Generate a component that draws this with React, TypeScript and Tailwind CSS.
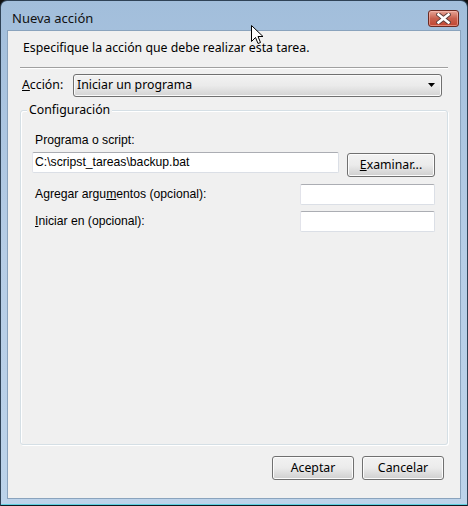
import React from "react";

const seg = { fontFamily: '"Noto Sans", "Open Sans", sans-serif' };
const ms = { fontFamily: '"Liberation Sans", Arial, sans-serif' };

function TextBox({ className, value }: { className: string; value?: string }) {
  return (
    <div
      className={
        "h-[21px] bg-white border border-[#dbdfe6] border-t-[#abadb3] border-l-[#e2e3ea] rounded-[2px] flex items-center px-[2px] text-[12.2px] text-black " +
        className
      }
      style={ms}
    >
      {value}
    </div>
  );
}

function Btn({ children, className }: { children: React.ReactNode; className: string }) {
  return (
    <div
      className={
        "h-[24px] rounded-[3px] border border-[#707070] bg-gradient-to-b from-[#f2f2f2] via-[#ebebeb] to-[#cfcfcf] shadow-[inset_0_0_0_1px_#fcfcfc] flex items-center justify-center text-[12.3px] text-black " +
        className
      }
      style={seg}
    >
      {children}
    </div>
  );
}

export default function App() {
  return (
    <div className="w-[468px] h-[506px] bg-[#101010] relative overflow-hidden">
      <div className="w-full h-full rounded-t-[7px] border border-[#2f4256] border-b-[#101820] bg-gradient-to-b from-[#a2bedb] via-[#b6cde6] to-[#bcd3ea] flex flex-col px-[6px] pb-[6px] shadow-[inset_0_-1px_0_#5fd0e0]">
        {/* title bar */}
        <div className="h-[29px] flex items-start justify-between shrink-0">
          <div className="pt-[8px] pl-[5px] text-[13px] leading-[18px] text-[#111]" style={seg}>
            Nueva acción
          </div>
          <div className="mt-[9px] mr-[2px] w-[31px] h-[17px] rounded-[3px] border border-[#6b2a22] bg-gradient-to-b from-[#e6a597] via-[#c8604e] to-[#c24632] shadow-[inset_0_0_0_1px_rgba(255,200,190,0.5)] flex items-center justify-center">
            <svg width="15" height="11" viewBox="0 0 15 11">
              <path
                d="M2.5 1.5 L12.5 9.5 M12.5 1.5 L2.5 9.5"
                stroke="#5a3a38"
                strokeWidth="4.4"
                strokeLinecap="square"
              />
              <path
                d="M2.5 1.5 L12.5 9.5 M12.5 1.5 L2.5 9.5"
                stroke="#ffffff"
                strokeWidth="2.6"
                strokeLinecap="square"
              />
            </svg>
          </div>
        </div>

        {/* client */}
        <div className="flex-1 bg-[#f0f0f0] border border-[#8aa3bd] flex flex-col text-black" style={seg}>
          <div className="pl-[15px] pt-[8px] h-[36px] text-[12.3px] leading-[17px]">
            Especifique la acción que debe realizar esta tarea.
          </div>
          <div className="ml-[12px] mr-[12px] h-[2px] border-t border-[#a0a0a0] border-b border-b-white" />
          <div className="flex items-center mt-[5px] ml-[14px] mr-[18px] h-[23px]">
            <div className="w-[51px] text-[12.3px]">
              <span className="underline">A</span>cción:
            </div>
            <div className="flex-1 h-[23px] rounded-[3px] border border-[#707070] bg-gradient-to-b from-[#f2f2f2] via-[#ebebeb] to-[#d3d3d3] shadow-[inset_0_0_0_1px_#fafafa] flex items-center justify-between pl-[3px] pr-[5px] text-[12.3px]">
              <span>Iniciar un programa</span>
              <svg width="8" height="5" viewBox="0 0 8 5">
                <path d="M0 0 H7 L3.5 4 Z" fill="#000" />
              </svg>
            </div>
          </div>

          {/* group box */}
          <div className="relative mt-[13px] ml-[12px] mr-[12px] h-[335px] rounded-[3px] border border-[#d5dfe5] shadow-[inset_1px_1px_0_#fff,1px_1px_0_#fff]">
            <div className="absolute -top-[10px] left-[6px] px-[2px] bg-[#f0f0f0] text-[12.3px] leading-[18px]">
              Configuración
            </div>
            <div className="pl-[14px] pt-[19px] text-[12.2px]" style={ms}>
              <div className="h-[20px] flex items-center">
                <span>
                  Pro<span className="underline">g</span>rama o script:
                </span>
              </div>
              <div className="flex items-start mt-[2px] ml-[-3px]">
                <TextBox className="w-[307px] pl-[2px]" value="C:\scripst_tareas\backup.bat" />
                <Btn className="ml-[8px] mt-[1px] w-[88px] h-[23px] border-[#3c7fb1] shadow-[inset_0_0_0_1px_#48c8f4,inset_0_0_0_2px_#fafafa]">
                  <span className="underline">E</span>xaminar...
                </Btn>
              </div>
              <div className="flex items-center mt-[7px] h-[21px]">
                <div className="w-[265px]">
                  Agregar argu<span className="underline">m</span>entos (opcional):
                </div>
                <TextBox className="w-[135px]" />
              </div>
              <div className="flex items-center mt-[6px] h-[21px]">
                <div className="w-[265px]">
                  <span className="underline">I</span>niciar en (opcional):
                </div>
                <TextBox className="w-[135px]" />
              </div>
            </div>
          </div>

          <div className="flex justify-end mt-[11px] mr-[16px] gap-[8px]">
            <Btn className="w-[82px]">Aceptar</Btn>
            <Btn className="w-[82px]">Cancelar</Btn>
          </div>
        </div>
      </div>

      {/* mouse cursor */}
      <svg className="absolute left-[251px] top-[25px]" width="13" height="20" viewBox="0 0 13 20">
        <path
          d="M0.5 0.5 L0.5 16.5 L4.5 12.5 L7 18.5 L9.5 17.5 L7 11.5 L12 11.5 Z"
          fill="#fff"
          stroke="#000"
          strokeWidth="1"
          strokeLinejoin="miter"
        />
      </svg>
    </div>
  );
}
